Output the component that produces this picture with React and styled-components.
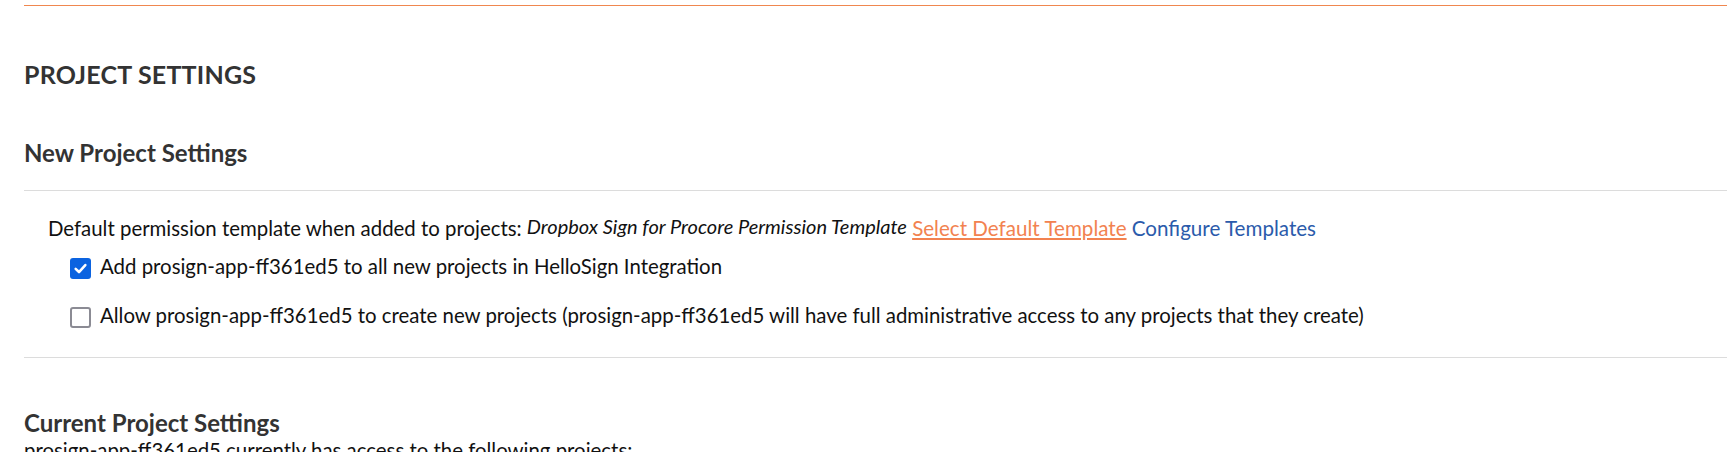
import React from "react";
import styled, { createGlobalStyle } from "styled-components";

const Global = createGlobalStyle`
  html, body { margin: 0; padding: 0; background: #fff; }
  body { font-family: Lato, "Open Sans", Arial, sans-serif; color: #111; }
`;

const Page = styled.div`
  padding-left: 24px;
  padding-top: 5px;
`;

const TopRule = styled.div`
  border-top: 1px solid #f0874f;
`;

const Title = styled.h1`
  margin: 53px 0 0;
  font-size: 25px;
  line-height: 1.2;
  font-weight: 700;
  letter-spacing: 0.2px;
  color: #333;
`;

const SectionTitle = styled.h2`
  margin: ${(p) => p.$top}px 0 0;
  font-size: 24px;
  line-height: 1.2;
  font-weight: 700;
  color: #333;
`;

const Divider = styled.hr`
  margin: ${(p) => p.$top}px 0 0;
  border: 0;
  border-top: 1px solid #dcdcdc;
  height: 0;
`;

const Body = styled.div`
  padding-left: 24px;
  padding-top: 25px;
  padding-bottom: 29px;
`;

const Line = styled.p`
  margin: 0;
  font-size: 20.4px;
  line-height: 24px;
  color: #111;
`;

const Template = styled.em`
  font-style: italic;
  font-size: 20px;
  position: relative;
  top: -2px;
`;

const Link = styled.a`
  font-size: 20.6px;
  color: ${(p) => (p.$tone === "orange" ? "#f28250" : "#2b5bab")};
  text-decoration: ${(p) => (p.$tone === "orange" ? "underline" : "none")};
  text-underline-offset: 2px;
  cursor: pointer;
`;

const Options = styled.div`
  display: flex;
  flex-direction: column;
  gap: 24px;
  margin-top: 14px;
  padding-left: 22px;
`;

const Option = styled.label`
  display: flex;
  align-items: flex-start;
  gap: 9px;
  font-size: 20.4px;
  line-height: 24px;
  color: #111;
`;

const Box = styled.span`
  box-sizing: border-box;
  width: 21px;
  height: 21px;
  margin-top: 4px;
  border-radius: 3px;
  flex: none;
  display: inline-flex;
  align-items: center;
  justify-content: center;
  background: ${(p) => (p.$checked ? "#0b63e0" : "#fff")};
  border: ${(p) => (p.$checked ? "none" : "2px solid #8b8b94")};
`;

const Text = styled.p`
  margin: 0;
  font-size: 20.4px;
  line-height: 24px;
  color: #111;
`;

function CheckBox({ checked }) {
  return (
    <Box $checked={checked}>
      {checked && (
        <svg width="15" height="15" viewBox="0 0 14 14">
          <path d="M2.5 7.3 L5.6 10.3 L11.5 3.8" fill="none" stroke="#fff" strokeWidth="2.4" strokeLinecap="round" strokeLinejoin="round" />
        </svg>
      )}
    </Box>
  );
}

export default function App() {
  return (
    <Page>
      <Global />
      <TopRule />
      <Title>PROJECT SETTINGS</Title>
      <SectionTitle $top={50}>New Project Settings</SectionTitle>
      <Divider $top={22} />
      <Body>
        <Line>
          Default permission template when added to projects:{" "}
          <Template>Dropbox Sign for Procore Permission Template</Template>{" "}
          <Link $tone="orange">Select Default Template</Link>{" "}
          <Link $tone="blue">Configure Templates</Link>
        </Line>
        <Options>
          <Option>
            <CheckBox checked />
            Add prosign-app-ff361ed5 to all new projects in HelloSign Integration
          </Option>
          <Option>
            <CheckBox checked={false} />
            Allow prosign-app-ff361ed5 to create new projects (prosign-app-ff361ed5 will have full administrative access to any projects that they create)
          </Option>
        </Options>
      </Body>
      <Divider $top={0} />
      <SectionTitle $top={51}>Current Project Settings</SectionTitle>
      <Text>prosign-app-ff361ed5 currently has access to the following projects:</Text>
    </Page>
  );
}
